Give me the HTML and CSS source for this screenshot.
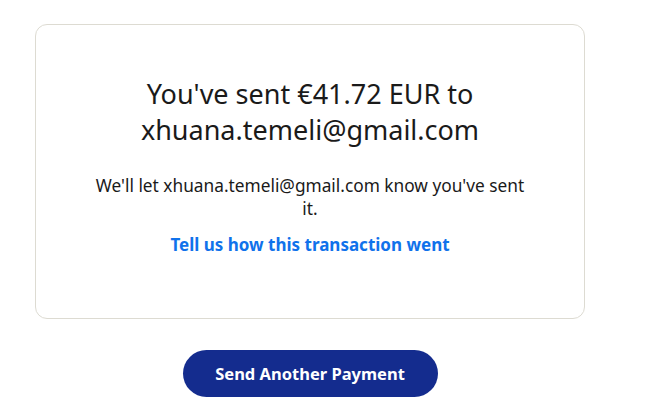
FILE: index.html
```
<!DOCTYPE html>
<html>
  <head>
    <meta charset="utf-8">
    <title>Payment sent</title>
    <link rel="stylesheet" href="styles.css">
  </head>
  <body>
    <div class="page">
      <div class="card">
        <h1>You've sent &euro;41.72 EUR to xhuana.temeli@gmail.com</h1>
        <p class="note">We'll let xhuana.temeli@gmail.com know you've sent it.</p>
        <a class="feedback" href="#">Tell us how this transaction went</a>
      </div>
      <div class="actions">
        <a class="btn" href="#">Send Another Payment</a>
      </div>
    </div>
  </body>
</html>
```

FILE: styles.css
```
body
{
    margin: 0;
    background-color: white;
    font-family: "Noto Sans", "Open Sans", sans-serif;
    color: #1a1a1a;
}
.page { width: 620px; padding-top: 24px; }
.card
{
    margin: 0 35px;
    border: 1px solid #dddbd2;
    border-radius: 12px;
    padding: 51px 50px 61px;
    text-align: center;
}
h1
{
    font-size: 27px;
    font-weight: 400;
    line-height: 36px;
    margin: 0 auto;
    max-width: 360px;
}
.note
{
    font-size: 17.3px;
    line-height: 23px;
    margin: 26px auto 0;
    max-width: 440px;
}
.feedback
{
    display: inline-block;
    margin-top: 13px;
    font-size: 17px;
    line-height: 24px;
    font-weight: 700;
    color: #1072eb;
    text-decoration: none;
}
.actions
{
    display: flex;
    justify-content: center;
    padding-top: 31px;
}
.btn
{
    display: inline-block;
    width: 255px;
    height: 47px;
    line-height: 47px;
    border-radius: 24px;
    background-color: #142c8e;
    color: white;
    font-size: 16.5px;
    font-weight: 700;
    text-align: center;
    text-decoration: none;
}
```
